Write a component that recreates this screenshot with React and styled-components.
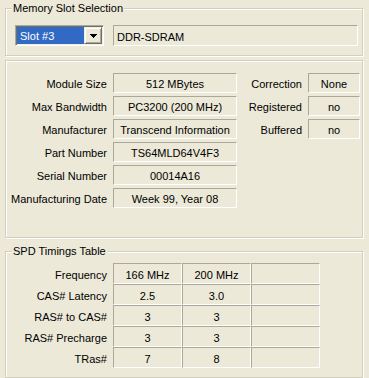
import React from 'react';
import styled, { createGlobalStyle } from 'styled-components';

const Global = createGlobalStyle`
  html, body { margin: 0; padding: 0; background: #ECE9D8; }
  body {
    width: 369px; height: 378px; overflow: hidden;
    font-family: "Liberation Sans", Arial, sans-serif;
    font-size: 11px; color: #000;
  }
`;

const Page = styled.div`
  display: flex;
  flex-direction: column;
  align-items: flex-start;
  padding: 8px 0 0 5px;
`;

const Group = styled.div`
  position: relative;
  box-sizing: border-box;
  width: 358px;
  height: ${p => p.$h}px;
  margin-top: ${p => p.$mt || 0}px;
  border: 1px solid #D0D0BF;
  box-shadow: inset 1px 1px 0 #fff, 1px 1px 0 #fff;
`;

const Legend = styled.span`
  position: absolute;
  top: -7px;
  left: 6px;
  padding: 0 1px;
  line-height: 13px;
  white-space: nowrap;
  background: #ECE9D8;
`;

const SlotRow = styled.div`
  display: flex;
  gap: 9px;
  padding: 16px 4px 0 9px;
`;

const Combo = styled.div`
  box-sizing: border-box;
  display: flex;
  width: 89px;
  height: 21px;
  padding: 1px;
  border-top: 1px solid #ACA899;
  border-left: 1px solid #ACA899;
  border-bottom: 1px solid #fff;
  border-right: 1px solid #fff;
  box-shadow: inset 1px 1px 0 #716F64, inset -1px -1px 0 #F1EFE2;
  background: #fff;
`;

const ComboValue = styled.div`
  flex: 1;
  background: #316AC5;
  color: #fff;
  padding-left: 3px;
  line-height: 18px;
`;

const DropButton = styled.div`
  box-sizing: border-box;
  width: 18px;
  display: flex;
  align-items: center;
  justify-content: center;
  background: #ECE9D8;
  border-top: 1px solid #F1EFE2;
  border-left: 1px solid #F1EFE2;
  border-bottom: 1px solid #716F64;
  border-right: 1px solid #716F64;
  box-shadow: inset 1px 1px 0 #fff, inset -1px -1px 0 #ACA899;
`;

const Box = styled.div`
  box-sizing: border-box;
  display: flex;
  align-items: center;
  justify-content: ${p => (p.$left ? 'flex-start' : 'center')};
  padding: 2px ${p => (p.$left ? '3px' : '0')} 0;
  height: ${p => p.$h || 20}px;
  ${p => (p.$grow ? 'flex: 1;' : '')}
  border-top: 1px solid #ACA899;
  border-left: 1px solid #ACA899;
  border-bottom: 1px solid #fff;
  border-right: 1px solid #fff;
  white-space: nowrap;
`;

const Label = styled.div`
  display: flex;
  align-items: center;
  justify-content: flex-end;
  white-space: nowrap;
  padding-top: 2px;
  padding-right: ${p => p.$pr || 0}px;
`;

const InfoBody = styled.div`
  display: flex;
  gap: 6px;
  padding: 12px 1px 0 5px;
`;

const InfoGrid = styled.div`
  display: grid;
  grid-template-columns: ${p => p.$cols};
  grid-auto-rows: 20px;
  column-gap: 6px;
  row-gap: 3px;
  align-content: start;
`;

const TimingGrid = styled.div`
  display: grid;
  grid-template-columns: 102px repeat(3, 69px);
  grid-auto-rows: 21px;
  padding: 11px 0 0 5px;
`;

const Arrow = () => (
  <svg width="7" height="4" viewBox="0 0 7 4">
    <path d="M0 0h7v1H0z M1 1h5v1H1z M2 2h3v1H2z M3 3h1v1H3z" fill="#000" />
  </svg>
);

const info = [
  ['Module Size', '512 MBytes'],
  ['Max Bandwidth', 'PC3200 (200 MHz)'],
  ['Manufacturer', 'Transcend Information'],
  ['Part Number', 'TS64MLD64V4F3'],
  ['Serial Number', '00014A16'],
  ['Manufacturing Date', 'Week 99, Year 08'],
];

const extra = [
  ['Correction', 'None'],
  ['Registered', 'no'],
  ['Buffered', 'no'],
];

const timings = [
  ['Frequency', '166 MHz', '200 MHz', ''],
  ['CAS# Latency', '2.5', '3.0', ''],
  ['RAS# to CAS#', '3', '3', ''],
  ['RAS# Precharge', '3', '3', ''],
  ['TRas#', '7', '8', ''],
];

export default function App() {
  return (
    <>
      <Global />
      <Page>
        <Group $h={48}>
          <Legend>Memory Slot Selection</Legend>
          <SlotRow>
            <Combo>
              <ComboValue>Slot #3</ComboValue>
              <DropButton><Arrow /></DropButton>
            </Combo>
            <Box $h={21} $left $grow>DDR-SDRAM</Box>
          </SlotRow>
        </Group>

        <Group $h={178} $mt={4}>
          <InfoBody>
            <InfoGrid $cols="96px 124px">
              {info.map(([l, v]) => (
                <React.Fragment key={l}>
                  <Label>{l}</Label>
                  <Box>{v}</Box>
                </React.Fragment>
              ))}
            </InfoGrid>
            <InfoGrid $cols="59px 52px">
              {extra.map(([l, v]) => (
                <React.Fragment key={l}>
                  <Label>{l}</Label>
                  <Box>{v}</Box>
                </React.Fragment>
              ))}
            </InfoGrid>
          </InfoBody>
        </Group>

        <Group $h={127} $mt={13}>
          <Legend>SPD Timings Table</Legend>
          <TimingGrid>
            {timings.map(([l, ...vals]) => (
              <React.Fragment key={l}>
                <Label $pr={6}>{l}</Label>
                {vals.map((v, i) => (
                  <Box key={i} $h={21}>{v}</Box>
                ))}
              </React.Fragment>
            ))}
          </TimingGrid>
        </Group>
      </Page>
    </>
  );
}
